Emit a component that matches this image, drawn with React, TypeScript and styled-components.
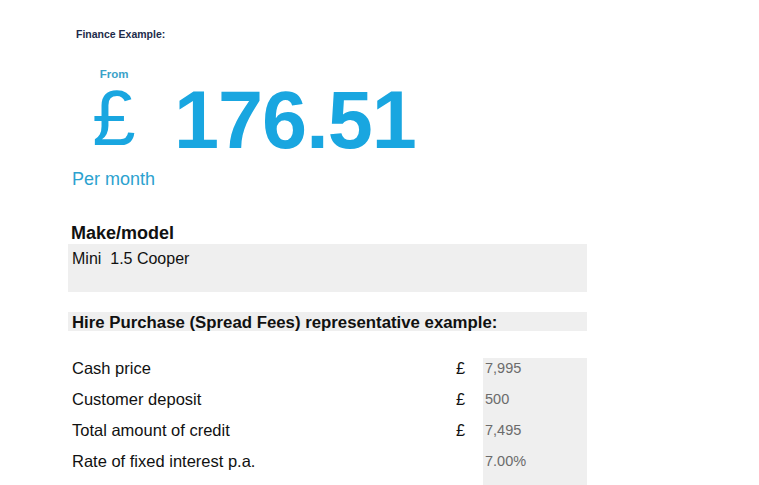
import React from 'react';
import styled, { createGlobalStyle } from 'styled-components';

const GlobalStyle = createGlobalStyle`
  html, body {
    margin: 0;
    padding: 0;
    background: #ffffff;
  }
  body {
    font-family: "Liberation Sans", Arial, sans-serif;
    color: #111111;
  }
`;

interface IRow {
    label: string,
    pound: boolean,
    value: string,
}

const rows: IRow[] = [
    { label: 'Cash price', pound: true, value: '7,995' },
    { label: 'Customer deposit', pound: true, value: '500' },
    { label: 'Total amount of credit', pound: true, value: '7,495' },
    { label: 'Rate of fixed interest p.a.', pound: false, value: '7.00%' },
];

const App = () => {
    return (
        <Page>
            <GlobalStyle />
            <Title>Finance Example:</Title>
            <Hero>
                <PoundCol>
                    <From>From</From>
                    <BigPound>£</BigPound>
                </PoundCol>
                <Amount>176.51</Amount>
            </Hero>
            <PerMonth>Per month</PerMonth>

            <Section>
                <SectionLabel>Make/model</SectionLabel>
                <ModelBox>{'Mini  1.5 Cooper'}</ModelBox>
                <HeadingBar>Hire Purchase (Spread Fees) representative example:</HeadingBar>
                <Table>
                    {rows.map((row) => (
                        <Row key={row.label}>
                            <Label>{row.label}</Label>
                            <PoundCell>{row.pound ? '£' : ''}</PoundCell>
                            <Value>{row.value}</Value>
                        </Row>
                    ))}
                    <Row $short>
                        <Label />
                        <PoundCell />
                        <Value />
                    </Row>
                </Table>
            </Section>
        </Page>
    )
}
export default App;

const Page = styled.div`
    padding: 27px 0 0 68px;
    width: 519px;
`;

const Title = styled.div`
    margin-left: 8px;
    font-size: 10.5px;
    line-height: 14px;
    font-weight: 700;
    color: #1d2b4a;
`;

const Hero = styled.div`
    display: flex;
    align-items: flex-start;
    margin-top: 21px;
    margin-left: 21px;
    height: 86px;
`;

const PoundCol = styled.div`
    display: flex;
    flex-direction: column;
    align-items: center;
    width: 50px;
    padding-top: 5px;
`;

const From = styled.div`
    font-size: 11.5px;
    line-height: 14px;
    font-weight: 700;
    color: #3ba2c9;
`;

const BigPound = styled.div`
    margin-top: 4px;
    font-size: 78px;
    line-height: 66px;
    color: #19a6e0;
`;

const Amount = styled.div`
    margin-left: 35px;
    margin-top: 16px;
    font-size: 81px;
    line-height: 84px;
    font-weight: 700;
    color: #19a6e0;
    letter-spacing: -1px;
`;

const PerMonth = styled.div`
    margin-top: 20px;
    margin-left: 4px;
    font-size: 18px;
    line-height: 22px;
    color: #2ca2cf;
`;

const Section = styled.div`
    margin-top: 32px;
`;

const SectionLabel = styled.div`
    padding-left: 3px;
    font-size: 18px;
    line-height: 22px;
    font-weight: 700;
`;

const ModelBox = styled.div`
    height: 48px;
    box-sizing: border-box;
    padding: 5px 0 0 4px;
    background: #efefef;
    font-size: 16px;
    line-height: 20px;
    white-space: pre;
`;

const HeadingBar = styled.div`
    margin-top: 20px;
    height: 19px;
    box-sizing: border-box;
    padding: 2px 0 0 4px;
    background: #efefef;
    font-size: 16.8px;
    line-height: 17px;
    font-weight: 700;
    white-space: nowrap;
`;

const Table = styled.div`
    margin-top: 27px;
    display: flex;
    flex-direction: column;
`;

const Row = styled.div<{ $short?: boolean }>`
    display: grid;
    grid-template-columns: 1fr 27px 104px;
    height: ${(p) => (p.$short ? '10px' : '31px')};
`;

const Label = styled.div`
    padding-left: 4px;
    font-size: 16.5px;
    line-height: 20px;
`;

const PoundCell = styled.div`
    font-size: 16.5px;
    line-height: 20px;
`;

const Value = styled.div`
    background: #efefef;
    padding-left: 2px;
    font-size: 14.5px;
    line-height: 20px;
    color: #6b6b6b;
`;
